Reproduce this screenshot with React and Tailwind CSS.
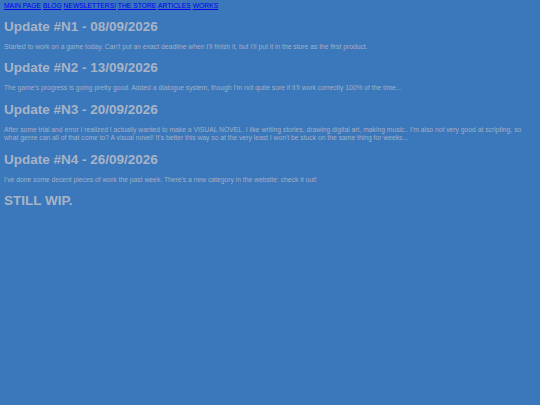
const posts = [
  {
    title: 'Update #N1 - 08/09/2026',
    body: "Started to work on a game today. Can't put an exact deadline when I'll finish it, but I'll put it in the store as the first product.",
  },
  {
    title: 'Update #N2 - 13/09/2026',
    body: "The game's progress is going pretty good. Added a dialogue system, though I'm not quite sure if it'll work correctly 100% of the time...",
  },
  {
    title: 'Update #N3 - 20/09/2026',
    body: "After some trial and error I realized I actually wanted to make a VISUAL NOVEL. I like writing stories, drawing digital art, making music.. I'm also not very good at scripting, so what genre can all of that come to? A visual novel! It's better this way so at the very least I won't be stuck on the same thing for weeks...",
  },
  {
    title: 'Update #N4 - 26/09/2026',
    body: "I've done some decent pieces of work the past week. There's a new category in the website: check it out!",
  },
];

const links = ['MAIN PAGE', 'BLOG', 'NEWSLETTERS!', 'THE STORE', 'ARTICLES', 'WORKS'];

export default function App() {
  return (
    <div className="min-h-screen w-full bg-[#3b77bb] px-[4px] pt-[2px] font-['Liberation_Sans',Arial,sans-serif]">
      {/* nav */}
      <nav className="text-[6.75px] leading-[8px] text-[#0000ee]">
        {links.map((l, i) => (
          <span key={l}>
            <a href="#" className="underline">
              {l}
            </a>
            {i < links.length - 1 ? ' ' : ''}
          </span>
        ))}
      </nav>

      <div className="mt-[9px] flex flex-col">
        {posts.map((p) => (
          <div key={p.title} className="flex flex-col">
            <h2 className="mb-[8.5px] text-[13.5px] font-bold leading-[15.5px] text-[#a8b4c6]">
              {p.title}
            </h2>
            <p className="mb-[8.5px] pr-[4px] text-[6.75px] leading-[8.75px] text-[#a3b0c4]">{p.body}</p>
          </div>
        ))}
        <h2 className="text-[13.5px] font-bold leading-[15.5px] text-[#a8b4c6]">STILL WIP.</h2>
      </div>
    </div>
  );
}
